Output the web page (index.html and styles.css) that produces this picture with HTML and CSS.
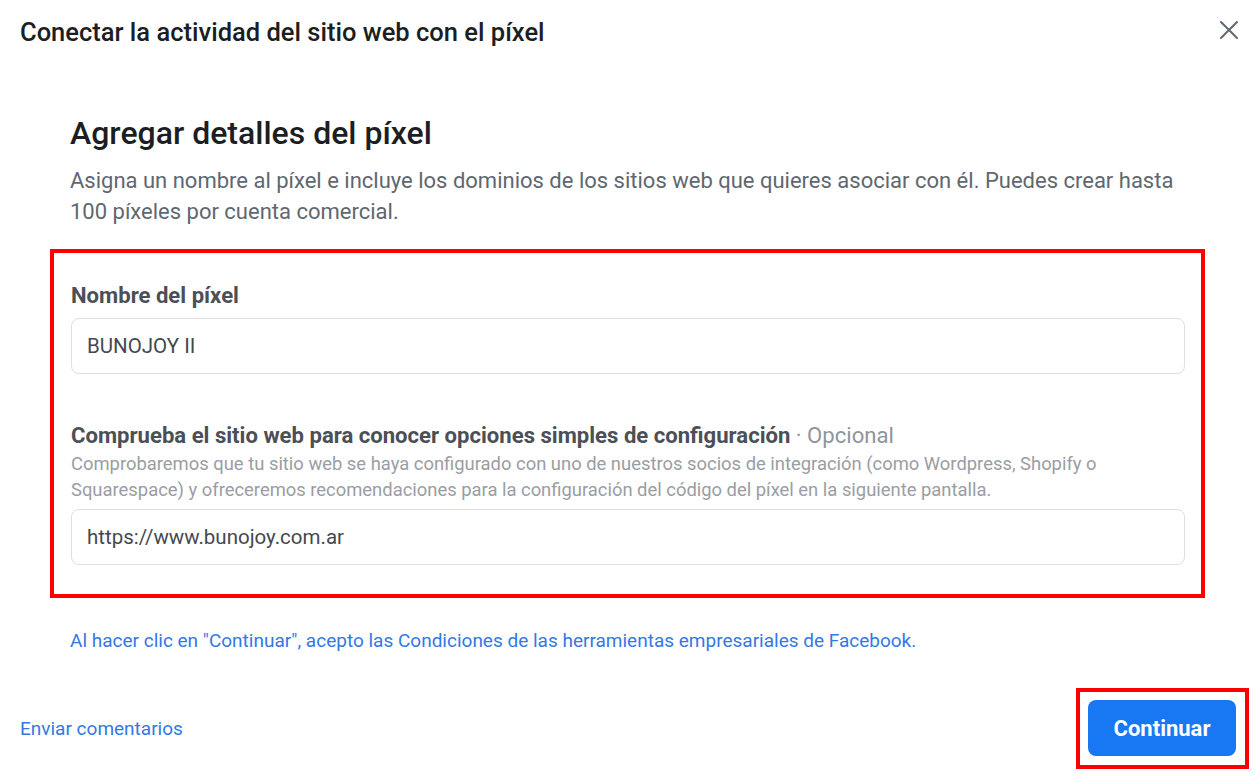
FILE: index.html
```html
<!DOCTYPE html>
<html lang="es">

<head>
    <meta charset="UTF-8">
    <meta name="viewport" content="width=device-width, initial-scale=1.0">
    <title>Agregar detalles del píxel</title>
    <link rel="stylesheet" href="styles.css">
</head>

<body>
    <div class="dialog">
        <header class="dialog-header">
            <h1>Conectar la actividad del sitio web con el píxel</h1>
            <button class="close" type="button" aria-label="Cerrar">
                <svg width="20" height="20" viewBox="0 0 20 20">
                    <path d="M2 2 L18 18 M18 2 L2 18" stroke="#606770" stroke-width="2" stroke-linecap="round" />
                </svg>
            </button>
        </header>

        <section class="intro">
            <h2>Agregar detalles del píxel</h2>
            <p>Asigna un nombre al píxel e incluye los dominios de los sitios web que quieres asociar con él. Puedes crear hasta 100 píxeles por cuenta comercial.</p>
        </section>

        <form class="fields highlight">
            <label class="field-label" for="pixel-name">Nombre del píxel</label>
            <input id="pixel-name" class="field-input" value="BUNOJOY II">

            <label class="field-label second" for="site-url">Comprueba el sitio web para conocer opciones simples de configuración <span class="optional">· Opcional</span></label>
            <p class="help">Comprobaremos que tu sitio web se haya configurado con uno de nuestros socios de integración (como Wordpress, Shopify o Squarespace) y ofreceremos recomendaciones para la configuración del código del píxel en la siguiente pantalla.</p>
            <input id="site-url" class="field-input" value="https://www.bunojoy.com.ar">
        </form>

        <p class="terms"><a href="#">Al hacer clic en "Continuar", acepto las Condiciones de las herramientas empresariales de Facebook.</a></p>

        <footer class="dialog-footer">
            <a href="#" class="feedback">Enviar comentarios</a>
            <div class="highlight button-box">
                <button type="button" class="primary">Continuar</button>
            </div>
        </footer>
    </div>
</body>

</html>
```

FILE: styles.css
```css
* {
    box-sizing: border-box;
    font-family: Roboto, 'Liberation Sans', Arial, sans-serif;
}

body {
    margin: 0;
    background: #fff;
    color: #1c1e21;
}

.dialog {
    width: 1255px;
    height: 775px;
    background: #fff;
}

.dialog-header {
    display: flex;
    justify-content: space-between;
    align-items: center;
    padding: 18px 16px 0 20px;

    h1 {
        margin: 0;
        font-size: 25.5px;
        line-height: 28px;
        font-weight: 500;
        color: #1c1e21;
    }
}

.close {
    display: flex;
    padding: 0;
    border: 0;
    background: none;
    cursor: pointer;
    margin-top: -4px;
}

.intro {
    padding: 0 70px;
    margin-top: 71px;

    h2 {
        margin: 0;
        font-size: 32px;
        line-height: 32px;
        font-weight: 500;
        color: #1c1e21;
    }

    p {
        margin: 16px 0 0;
        font-size: 22px;
        line-height: 31px;
        color: #606770;
    }
}

.highlight {
    border: 4px solid #ff0000;
}

.fields {
    display: flex;
    flex-direction: column;
    margin: 22px 50px 0;
    padding: 30px 16px 29px 17px;
}

.field-label {
    font-size: 22.1px;
    line-height: 24px;
    font-weight: 700;
    color: #4b4f56;

    &.second {
        margin-top: 49px;
    }

    .optional {
        font-weight: 400;
        color: #90949c;
    }
}

.field-input {
    margin-top: 11px;
    height: 56px;
    padding: 0 15px;
    border: 1px solid #dddfe2;
    border-radius: 8px;
    font-size: 20.5px;
    color: #444950;
    outline: none;
}

.help {
    margin: 4px 0 0;
    font-size: 18.4px;
    line-height: 26px;
    color: #9a9da3;

    + .field-input {
        margin-top: 6px;
    }
}

.terms {
    margin: 33px 70px 0;
    font-size: 19px;
    line-height: 20px;

    a {
        color: #3578e5;
        text-decoration: none;
    }
}

.dialog-footer {
    display: flex;
    justify-content: space-between;
    align-items: center;
    margin-top: 37px;
    padding: 0 6px 0 20px;
}

.feedback {
    font-size: 19px;
    color: #3578e5;
    text-decoration: none;
}

.button-box {
    padding: 8px 9px 9px 8px;
}

.primary {
    display: block;
    width: 148px;
    height: 56px;
    border: 0;
    border-radius: 8px;
    background: #1877f2;
    color: #fff;
    font-size: 22px;
    font-weight: 700;
    cursor: pointer;
}
```
